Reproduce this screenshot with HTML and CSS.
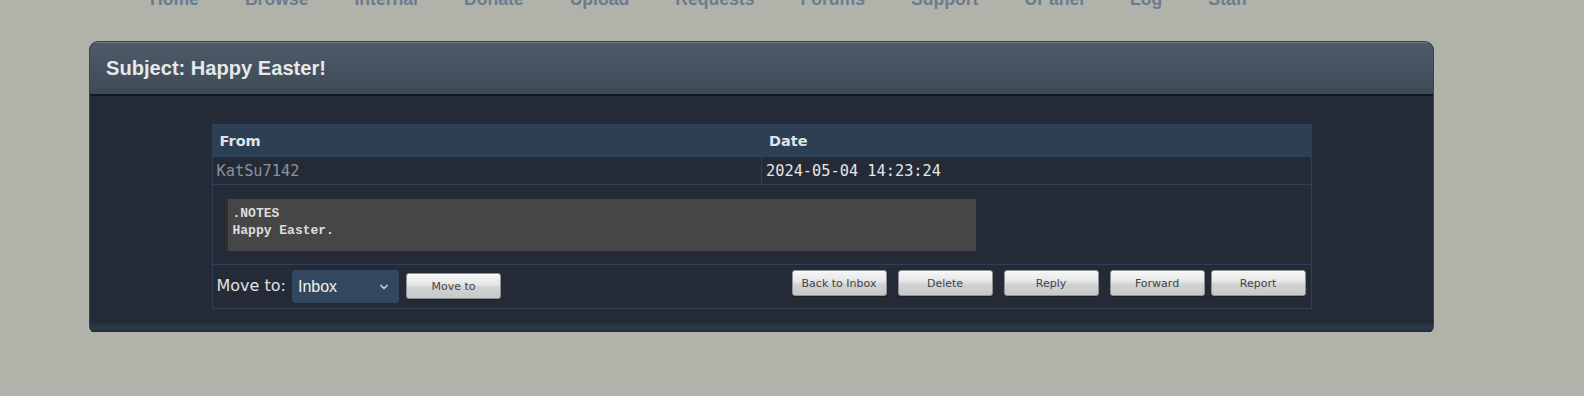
FILE: index.html
```html
<!DOCTYPE html>
<html lang="en">
<head>
    <meta charset="UTF-8">
    <title>Happy Easter!</title>
    <link rel="stylesheet" href="styles.css">
</head>
<body>
    <!-- top menu, scrolled mostly out of view -->
    <ul class="menu">
        <li>Home</li>
        <li>Browse</li>
        <li>Internal</li>
        <li>Donate</li>
        <li>Upload</li>
        <li>Requests</li>
        <li>Forums</li>
        <li>Support</li>
        <li>UPanel</li>
        <li>Log</li>
        <li>Staff</li>
    </ul>

    <div class="panel">
        <div class="panel-head">Subject: Happy Easter!</div>
        <div class="panel-body">
            <table class="message">
                <tr class="head">
                    <th>From</th>
                    <th>Date</th>
                </tr>
                <tr class="info">
                    <td class="sender">KatSu7142</td>
                    <td class="date">2024-05-04 14:23:24</td>
                </tr>
                <tr>
                    <td colspan="2" class="body-cell">
                        <pre class="notes">.NOTES
Happy Easter.</pre>
                    </td>
                </tr>
                <tr>
                    <td colspan="2" class="actions-cell">
                        <div class="actions">
                            <div class="move">
                                <span class="move-label">Move to:</span>
                                <div class="select-wrap">
                                    <select class="folder">
                                        <option>Inbox</option>
                                    </select>
                                    <svg class="chevron" width="10" height="6" viewBox="0 0 10 6"><path d="M1.5 1 L5 4.5 L8.5 1" fill="none" stroke="#d8dde3" stroke-width="1.4"/></svg>
                                </div>
                                <button class="btn btn-move">Move to</button>
                            </div>
                            <div class="buttons">
                                <button class="btn">Back to Inbox</button>
                                <button class="btn">Delete</button>
                                <button class="btn">Reply</button>
                                <button class="btn">Forward</button>
                                <button class="btn btn-last">Report</button>
                            </div>
                        </div>
                    </td>
                </tr>
            </table>
        </div>
    </div>
</body>
</html>
```

FILE: styles.css
```css
body {
    margin: 0;
    background: #b1b2aa;
    font-family: 'DejaVu Sans', sans-serif;
    overflow: hidden;
}

.menu {
    list-style: none;
    margin: -11px 0 0 0;
    padding: 0 0 0 150px;
    display: flex;
    gap: 46px;
    height: 20px;
    font-family: 'Liberation Sans', Arial, sans-serif;
    font-weight: bold;
    font-size: 17.6px;
    line-height: 20px;
    color: #6b7b90;
}

.panel {
    width: 1343px;
    margin: 33px 0 0 90px;
    border-radius: 8px 8px 6px 6px;
    background: #242b37;
    box-shadow: 0 1px 0 #1a1f27, 0 0 0 1px #3a4350;
    overflow: hidden;
}

.panel-head {
    height: 51px;
    padding-left: 16px;
    font-family: 'Liberation Sans', Arial, sans-serif;
    font-weight: bold;
    font-size: 20.1px;
    line-height: 51px;
    color: #e6e8ea;
    background: linear-gradient(#4d5a68, #3e4a57);
    border-top: 1px solid #6c7b8b;
    border-bottom: 2px solid #14181e;
}

.panel-body {
    padding: 28px 0 23px;
    background: linear-gradient(to bottom, #242b37 0, #242b37 calc(100% - 10px), #2b3a4b calc(100% - 4px), #242b37 100%);
}

.message {
    width: 1100px;
    margin: 0 auto;
    border-collapse: collapse;
}

.message td, .message th {
    border: 1px solid #2c4159;
}

.head th {
    background: #2d3f53;
    height: 31px;
    padding: 0 7px;
    text-align: left;
    font-size: 14.5px;
    font-weight: bold;
    color: #dfe3e8;
    width: 50%;
}

.info td {
    height: 26px;
    padding: 1px 4px 0;
    font-family: 'DejaVu Sans Mono', monospace;
    font-size: 15.3px;
}

.sender {
    color: #8b929c;
}

.date {
    color: #e4e6ea;
}

.body-cell {
    padding: 14px 12px 13px 12px;
}

.notes {
    width: 743px;
    margin: 0;
    padding: 6px 0 12px 5px;
    background: #464646;
    border-left: 3px solid #2f2f2f;
    font-family: 'Liberation Mono', monospace;
    font-weight: bold;
    font-size: 13px;
    line-height: 17px;
    color: #dedede;
}

.actions-cell {
    height: 43px;
    padding: 0 4px;
    vertical-align: top;
}

.actions {
    display: flex;
    justify-content: space-between;
    align-items: flex-start;
    padding-top: 5px;
}

.move {
    display: flex;
    align-items: flex-start;
    gap: 6px;
}

.move-label {
    font-size: 16px;
    line-height: 32px;
    color: #e0e2e6;
}

.select-wrap {
    position: relative;
}

.folder {
    appearance: none;
    width: 107px;
    height: 33px;
    padding: 0 0 0 6px;
    border: none;
    border-radius: 4px;
    background: #33485f;
    color: #eef0f3;
    font-family: 'Liberation Sans', Arial, sans-serif;
    font-size: 16px;
}

.chevron {
    position: absolute;
    right: 10px;
    top: 14px;
}

.btn {
    width: 95px;
    height: 26px;
    padding: 0;
    border: 1px solid #8e9196;
    border-radius: 3px;
    background: linear-gradient(#f7f7f7 0%, #e4e5e6 45%, #d0d2d4 55%, #c6c8ca 100%);
    box-shadow: inset 0 1px 0 #ffffff, 0 1px 0 #1b1f26;
    font-family: 'DejaVu Sans', sans-serif;
    font-size: 11px;
    color: #444;
}

.btn-move {
    margin-top: 3px;
    margin-left: 1px;
}

.buttons {
    display: flex;
    gap: 11px;
    margin-right: 1px;
}

.btn-last {
    margin-left: -5px;
}
```
